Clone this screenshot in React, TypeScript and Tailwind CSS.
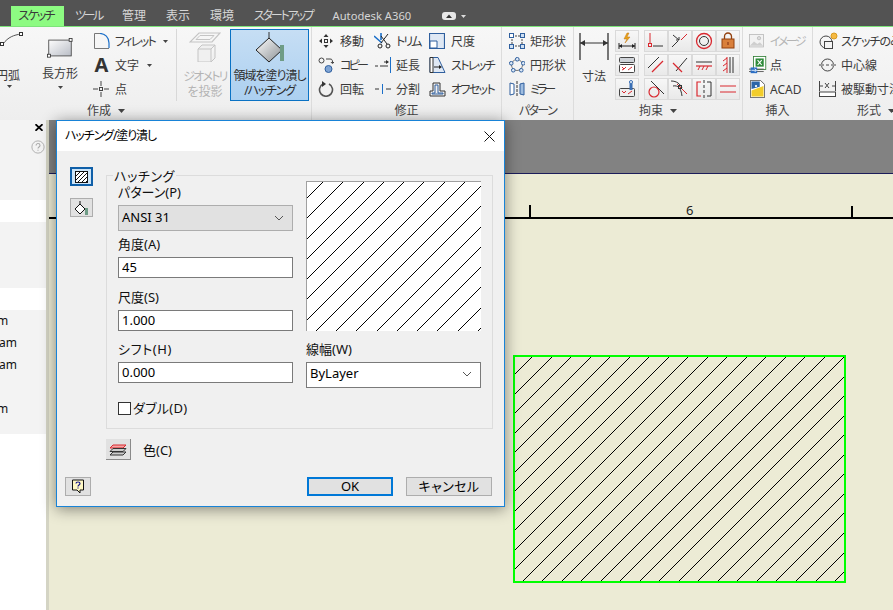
import React from "react";

const cn = (...a: (string | false | undefined)[]) => a.filter(Boolean).join(" ");

const I = ({ w = 16, h = 16, vw, vh, children, className }: { w?: number; h?: number; vw?: number; vh?: number; children: React.ReactNode; className?: string }) => (
  <svg width={w} height={h} viewBox={`0 0 ${vw ?? w} ${vh ?? h}`} fill="none" className={cn("block shrink-0", className)}>
    {children}
  </svg>
);

const Caret = ({ className }: { className?: string }) => (
  <svg width="7" height="4" viewBox="0 0 7 4" className={cn("block shrink-0", className)}>
    <path d="M0 0h7L3.5 4z" fill="#444" />
  </svg>
);

const SmallCaret = ({ className }: { className?: string }) => (
  <svg width="5" height="3" viewBox="0 0 5 3" className={cn("block shrink-0", className)}>
    <path d="M0 0h5L2.5 3z" fill="#444" />
  </svg>
);

const Chevron = () => (
  <svg width="10" height="6" viewBox="0 0 10 6" fill="none" className="block shrink-0">
    <path d="M1 1l4 4 4-4" stroke="#555" />
  </svg>
);

const B = "#2f5f9e";
const R = "#d9282f";
const K = "#333";

function Row({ icon, label, caret, disabled, gap = "gap-[6px]", track = "" }: { icon: React.ReactNode; label: string; caret?: boolean; disabled?: boolean; gap?: string; track?: string }) {
  return (
    <div className={cn("flex h-[24px] items-center whitespace-nowrap", gap, disabled ? "text-[#b4b4b4]" : "text-[#3a3a3a]")}>
      {icon}
      <span className={cn("pt-px", track)}>{label}</span>
      {caret && <SmallCaret className="ml-[3px]" />}
    </div>
  );
}

function Group({ w, title, arrow, titleClass, children }: { w: string; title: string; arrow?: boolean; titleClass?: string; children: React.ReactNode }) {
  return (
    <section className={cn("flex shrink-0 flex-col border-r border-[#dcdcdc]", w)}>
      <div className="flex h-[74px] pt-[2px]">{children}</div>
      <div className={cn("flex h-[19px] items-center gap-[7px] pt-px text-[#444]", titleClass ?? "justify-center")}>
        <span className={title === "パターン" ? "tracking-[-1.6px]" : ""}>{title}</span>
        {arrow && <Caret />}
      </div>
    </section>
  );
}

const MiniBtn = ({ children }: { children: React.ReactNode }) => (
  <div className="flex h-[22px] w-[24px] items-center justify-center border border-[#dadada] bg-gradient-to-b from-[#f7f7f7] to-[#e9e9e9]">{children}</div>
);

/* ---------- ribbon icons ---------- */
const ArcIcon = () => (
  <I w={24} h={22}>
    <path d="M3 12C8 5 14 3 21 2" stroke="#555" />
    <rect x="0.5" y="10.5" width="3" height="3" fill="#fff" stroke="#333" />
    <rect x="19.5" y="0.5" width="3" height="3" fill="#fff" stroke="#333" />
  </I>
);
const RectIcon = () => (
  <svg width="30" height="20" viewBox="0 0 32 24" className="block">
    <defs>
      <linearGradient id="rg" x1="0" y1="0" x2="1" y2="1">
        <stop offset="0" stopColor="#fdfdfd" />
        <stop offset="1" stopColor="#b9bdc6" />
      </linearGradient>
    </defs>
    <rect x="2.5" y="2.5" width="27" height="19" fill="url(#rg)" stroke="#444" />
    <rect x="1" y="19.5" width="3.5" height="3.5" fill="#fff" stroke="#333" />
    <rect x="27" y="0.5" width="3.5" height="3.5" fill="#fff" stroke="#333" />
  </svg>
);
const FilletIcon = () => (
  <I w={17} h={16}>
    <path d="M1.5 15.5V.5H7" stroke="#777" />
    <path d="M1.5 15.5H16" stroke="#777" />
    <path d="M7 .5C12 .5 16 4.5 16 10v5" stroke="#1b6fc9" strokeWidth="1.2" />
  </I>
);
const PointIcon = () => (
  <I w={16} h={16}>
    <path d="M8 0v5M8 11v5M0 8h5M11 8h5" stroke="#444" />
    <rect x="6.5" y="6.5" width="3" height="3" stroke="#444" />
  </I>
);
const GeomIcon = () => (
  <svg width="32" height="30" viewBox="0 0 32 30" fill="none" className="block">
    <path d="M10 1h21l-8 9H1z" stroke="#c4c4c4" strokeWidth="1.2" />
    <path d="M11 3.5h14l-4 4H7z" stroke="#c4c4c4" />
    <path d="M9 17h13v13H9zM9 17l4-4h13l-4 4M26 13v13l-4 4" fill="#f0f0f0" stroke="#c4c4c4" />
  </svg>
);
const FillIcon = () => (
  <svg width="30" height="32" viewBox="0 0 30 32" fill="none" className="block">
    <defs>
      <linearGradient id="dg" x1="0" y1="0" x2="1" y2="1">
        <stop offset="0" stopColor="#fff" />
        <stop offset="1" stopColor="#8a8f93" />
      </linearGradient>
    </defs>
    <path d="M14 1v12" stroke="#333" />
    <path d="M14 7L27 19 14 31 1 19z" fill="url(#dg)" stroke="#222" />
    <rect x="25" y="14" width="4" height="16" fill="#6f9c86" />
  </svg>
);
const MoveIcon = () => (
  <I>
    <path d="M8 1l2.5 3h-5zM8 15l2.5-3h-5zM1 8l3-2.5v5zM15 8l-3-2.5v5z" fill="#333" />
    <rect x="6.5" y="6.5" width="3" height="3" stroke="#333" />
  </I>
);
const CopyIcon = () => (
  <I>
    <circle cx="3.5" cy="3.5" r="2.5" stroke="#444" />
    <circle cx="10.5" cy="12" r="3.5" fill="#7fa4d4" stroke={B} />
    <path d="M8 2h4c2 0 2.5 1 2.5 3" stroke="#444" />
    <path d="M12.5 5h4l-2 2z" fill="#444" />
  </I>
);
const RotateIcon = () => (
  <I>
    <path d="M5 3A6.5 6.5 0 1 0 11 3" stroke="#555" strokeWidth="1.6" />
    <path d="M4 0v6l4-3z" fill="#333" />
  </I>
);
const TrimIcon = () => (
  <I w={18} h={16}>
    <path d="M0 3l8 7M7 0v7" stroke="#1b6fc9" strokeWidth="1.6" />
    <path d="M14 1L7 10M7 3l6 8" stroke="#222" />
    <circle cx="6" cy="13" r="2" stroke="#222" />
    <circle cx="14" cy="13" r="2" stroke="#222" />
  </I>
);
const ExtendIcon = () => (
  <I w={18} h={16}>
    <path d="M16.5 0v16" stroke="#1b6fc9" />
    <path d="M1 9h3M6 9h3M10 5h4" stroke="#333" />
    <path d="M12 3l3 2-3 2z" fill="#333" />
    <path d="M9 9h5" stroke="#333" />
  </I>
);
const SplitIcon = () => (
  <I w={18} h={16}>
    <path d="M1 8h4M12 8h5" stroke="#333" />
    <path d="M8.500 3v10" stroke="#1b6fc9" />
  </I>
);
const ScaleIcon = () => (
  <I>
    <path d="M.5.5h15v15H.5z" fill="#dfe8f4" stroke={B} strokeWidth="1.2" />
    <path d="M1 8h7v7H1z" fill="#fff" stroke={B} />
  </I>
);
const StretchIcon = () => (
  <I w={17} h={16}>
    <path d="M1 .5h8l7 15H1z" fill="#dfe8f4" stroke={B} />
    <path d="M1 .5h3v15H1z" fill="#fff" stroke="#333" />
    <path d="M5 10h6" stroke="#222" />
    <path d="M10 8l3 2-3 2z" fill="#222" />
  </I>
);
const OffsetIcon = () => (
  <I w={17} h={16}>
    <path d="M1 15V10h3V2h7v8h5v5z" stroke="#333" />
    <path d="M3 13v-1h3V4h3v8h5v1z" stroke={B} />
  </I>
);
const RectPatIcon = () => (
  <I>
    <path d="M3 3h10M3 3v10M3 13h10M13 3v10" stroke="#444" strokeDasharray="2 1" />
    {[[0, 0], [11, 0], [0, 11], [11, 11]].map(([x, y], i) => (
      <rect key={i} x={x + 0.5} y={y + 0.5} width="4" height="4" fill={i === 0 ? "#fff" : "#cfe0f3"} stroke={B} />
    ))}
  </I>
);
const CircPatIcon = () => (
  <I>
    <circle cx="8" cy="8" r="5.500" stroke="#777" />
    {[[6, 0], [0, 4], [12, 4], [2, 11], [10, 11]].map(([x, y], i) => (
      <rect key={i} x={x + 0.5} y={y + 0.5} width="3.500" height="3.500" rx="1.500" fill="#dbe8f6" stroke={B} />
    ))}
  </I>
);
const MirrorIcon = () => (
  <I>
    <path d="M1 2l4 1v10l-4 1z" fill="#fff" stroke={B} />
    <path d="M15 2l-4 1v10l4 1z" fill="#9fbde0" stroke={B} />
    <path d="M8 0v16" stroke="#333" strokeDasharray="3 1" />
  </I>
);
const DimIcon = () => (
  <I w={30} h={28}>
    <path d="M1 0v27M29 0v27" stroke="#333" strokeWidth="1.3" />
    <path d="M1 10h28" stroke="#333" />
    <path d="M1 10l5-3v6zM29 10l-5-3v6z" fill="#333" />
  </I>
);
const Box = ({ children }: { children: React.ReactNode }) => <I w={18} h={18}>{children}</I>;
const SmallAuto = () => (
  <Box>
    <path d="M9 1L6 7h3l-2 4 5-6H9l2-4z" fill="#e8a317" stroke="#c0761a" strokeWidth=".5" />
    <path d="M1 14h16M1 11v6M17 11v6" stroke="#222" />
    <path d="M1 14l3-2v4zM17 14l-3-2v4z" fill="#222" />
  </Box>
);
const SmallForm = () => (
  <Box>
    <rect x="1.500" y="1.500" width="15" height="5" rx="1" fill="#cfd3d8" stroke="#444" />
    <rect x="1.500" y="8.500" width="15" height="8" rx="1" fill="#fff" stroke="#444" />
    <path d="M4 11l2 2 2-2M4 14l2-1M10 14l4-3" stroke={R} />
  </Box>
);
const SmallFormLink = () => (
  <Box>
    <rect x="1.500" y="8.500" width="15" height="8" rx="1" fill="#eee" stroke="#444" />
    <path d="M4 11l2 2 2-2M10 14l4-3" stroke={R} />
    <path d="M13 1v9" stroke="#3a6fb5" strokeWidth="3" />
    <circle cx="13" cy="2" r="1.500" fill="#fff" stroke="#3a6fb5" />
  </Box>
);
const cons: React.ReactNode[] = [
  <><path d="M3 1v10" stroke={R} /><rect x="1.500" y="11.500" width="3" height="3" stroke={R} /><path d="M6 14h10" stroke={K} /></>,
  <><path d="M10 8L16 2" stroke={R} /><path d="M1 15l6-6" stroke={K} /><path d="M2 3l6 5M5 8h3V5" stroke={K} /></>,
  <><circle cx="9" cy="9" r="7.500" stroke={R} strokeWidth="1.300" /><circle cx="9" cy="9" r="4.500" stroke={K} /></>,
  <><rect x="3" y="7" width="12" height="9" fill="#d9803c" stroke="#92400e" /><path d="M5.500 7V4.500a3.500 3.500 0 0 1 7 0V7" stroke="#92400e" strokeWidth="1.300" /><path d="M9 10v3" stroke="#7c2d12" /></>,
  <><path d="M1 12L12 1" stroke={K} /><path d="M5 16L16 5" stroke={R} strokeWidth="1.200" /></>,
  <><path d="M5 15L16 2" stroke={K} /><path d="M2 7l9 9" stroke={R} strokeWidth="1.200" /></>,
  <><path d="M1 6h16" stroke={K} /><path d="M1 10h16" stroke={R} strokeWidth="1.200" /><path d="M3 14l2-4M7 14l2-4M11 14l2-4" stroke={R} /></>,
  <><path d="M11 1v16M14 1v16" stroke={K} /><path d="M8 1v16" stroke={R} /><path d="M4 5l4-3M4 10l4-3M4 15l4-3" stroke={R} /></>,
  <><circle cx="7" cy="12" r="5" stroke={R} strokeWidth="1.200" /><path d="M4 1l13 13" stroke={K} /></>,
  <><path d="M0 1c6 0 9 3 11 7M2 6c5-1 8 2 9 10" stroke={K} /><path d="M6 4l10 10" stroke={R} /><rect x="7.500" y="5.500" width="3" height="3" stroke={K} /></>,
  <><path d="M9 0v18" stroke={K} strokeDasharray="3 2" /><path d="M6 2H2v14h4" stroke={R} strokeWidth="1.200" /><path d="M12 2h4v14h-4" stroke={K} /></>,
  <><path d="M1 6h16M1 12h16" stroke={R} strokeWidth="1.200" /></>,
];
const ImageIcon = () => (
  <I w={15} h={15} vw={18} vh={18}>
    <rect x=".5" y=".5" width="17" height="15" fill="#f2f2f2" stroke="#bbb" />
    <path d="M1 14l5-5 4 3 3-2 4 4z" fill="#cfcfcf" />
    <circle cx="12" cy="5" r="2" fill="#ddd" stroke="#bbb" />
  </I>
);
const ExcelIcon = () => (
  <I w={18} h={18} vw={22} vh={22}>
    <rect x="5.500" y=".5" width="15" height="16" fill="#fff" stroke="#2e7d32" />
    <rect x="8" y="3" width="10" height="10" fill="#2e8b3a" />
    <path d="M10.500 5l5 6M15.500 5l-5 6" stroke="#fff" strokeWidth="1.300" />
    <path d="M0 16h18M0 19h18" stroke="#444" />
    <path d="M2 14h8v7H2z" fill="#2c6fc4" />
    <path d="M3 17.500h6M7 15.500l2 2-2 2" stroke="#fff" />
  </I>
);
const AcadIcon = () => (
  <I w={15} h={18} vw={20} vh={24} className="ml-px">
    <path d="M.5.5H14L19.500 6v17.500H.5z" fill="#fff" stroke="#333" />
    <path d="M2 2h11v7l-11 3z" fill="#2c65a8" />
    <path d="M2 14l16-6v14H2z" fill="#f2cd2b" />
    <circle cx="8" cy="8" r="1.500" fill="#fff" />
  </I>
);
const SketchOnlyIcon = () => (
  <I w={19} h={18}>
    <circle cx="7" cy="10" r="6" stroke="#444" />
    <rect x="5.500" y="9.500" width="8" height="7" fill="#f5f5f5" stroke="#444" />
    <circle cx="15" cy="4" r="3" fill="#f5b942" stroke="#d99a1c" />
  </I>
);
const CenterIcon = () => (
  <I w={17} h={16}>
    <circle cx="8.500" cy="8" r="6" stroke="#444" />
    <path d="M2 8h13" stroke="#f5f5f5" strokeWidth="2" />
    <path d="M0 8h5M7 8h3M12 8h5" stroke="#444" />
  </I>
);
const DrivenIcon = () => (
  <I w={17} h={16}>
    <path d="M.5 0v10M16.500 0v10M0 5h4M13 5h4" stroke="#444" />
    <path d="M6 2l4 5M10 2L6 7" stroke="#444" />
    <rect x=".5" y="11" width="16" height="4.500" fill="#fff" stroke="#444" />
  </I>
);

/* ---------- hatching ---------- */
function Hatch({ w, h, c0, step, n }: { w: number; h: number; c0: number; step: number; n: number }) {
  return (
    <svg width={w} height={h} viewBox={`0 0 ${w} ${h}`} className="block" shapeRendering="crispEdges">
      {Array.from({ length: n }, (_, i) => {
        const c = Math.round(c0 + step * i);
        return <line key={i} x1={c + 1} y1={-1} x2={c - h - 1} y2={h + 1} stroke="#000" strokeWidth="1" />;
      })}
    </svg>
  );
}

/* ---------- dialog parts ---------- */
const Label = ({ children, className }: { children: React.ReactNode; className?: string }) => (
  <div className={cn("h-[16px] text-[13px] leading-[16px] text-[#111]", className)}>{children}</div>
);
const Field = ({ value, className }: { value: string; className?: string }) => (
  <input readOnly value={value} className={cn("block h-[21px] w-[175px] border border-[#7a7a7a] bg-white pb-[2px] pl-[3px] pr-[3px] text-[13px] text-black outline-none", className)} />
);

function HatchDialog() {
  return (
    <div className="absolute left-[56px] top-[120px] flex h-[387px] w-[449px] flex-col border border-[#1883d7] bg-[#f0f0f0] shadow-[0_2px_14px_rgba(0,0,0,0.45)]">
      <header className="flex h-[30px] shrink-0 items-center justify-between bg-white pl-[8px] pr-[8px] text-[12px] text-black">
        <span className="tracking-[-1.1px]">ハッチング/塗り潰し</span>
        <svg width="11" height="11" viewBox="0 0 11 11" fill="none" className="mr-[1px] block">
          <path d="M.5.5l10 10M10.500.5l-10 10" stroke="#111" />
        </svg>
      </header>

      <div className="flex flex-1 flex-col">
        <div className="flex pt-[24px]">
          <div className="flex w-[49px] shrink-0 flex-col gap-[12px] pl-[13px]">
            <button className="-mt-[8px] flex h-[19px] w-[23px] items-center justify-center border-2 border-[#0f5fa8] bg-[#cce4f7]">
              <svg width="13" height="12" viewBox="0 0 13 12" fill="none" className="block">
                <rect x=".5" y=".5" width="12" height="11" fill="#fff" stroke="#111" />
                <path d="M0 6l6-6M0 10L10 0M2 12L13 1M6 12l7-7M10 12l3-3" stroke="#111" />
              </svg>
            </button>
            <button className="flex h-[19px] w-[23px] items-center justify-center border border-[#adadad] bg-[#e1e1e1]">
              <svg width="15" height="14" viewBox="0 0 15 14" fill="none" className="block">
                <path d="M6 0v4" stroke="#111" />
                <path d="M6 3l5 5-5 5-5-5z" fill="#fff" stroke="#111" />
                <rect x="11" y="7" width="3" height="7" fill="#6f9c86" />
              </svg>
            </button>
          </div>

          <div className="relative h-[254px] w-[387px] border border-[#dcdcdc]">
            <div className="absolute -top-[8px] left-[6px] bg-[#f0f0f0] px-[1px] text-[13px] leading-[16px] tracking-[0.6px] text-[#111]">ハッチング</div>
            <div className="flex gap-[13px] pl-[11px]">
              <div className="w-[175px]">
                <Label className="mt-[8px]">パターン(P)</Label>
                <div className="mt-[5px] flex h-[26px] items-center justify-between border border-[#adadad] bg-[#e1e1e1] pl-[3px] pr-[8px] text-[13px] text-black">
                  <span>ANSI 31</span>
                  <Chevron />
                </div>
                <Label className="mt-[5px]">角度(A)</Label>
                <Field value="45" className="mt-[5px]" />
                <Label className="mt-[11px]">尺度(S)</Label>
                <Field value="1.000" className="mt-[5px]" />
                <Label className="mt-[10px] tracking-[0.6px]">シフト(H)</Label>
                <Field value="0.000" className="mt-[5px]" />
                <div className="mt-[18px] flex items-center gap-[2px]">
                  <span className="block h-[13px] w-[13px] border border-[#333] bg-white" />
                  <span className="h-[14px] text-[13px] leading-[14px] tracking-[0.3px] text-[#111]">ダブル(D)</span>
                </div>
              </div>
              <div className="w-[175px]">
                <div className="mt-[5px] h-[150px] w-[175px] overflow-hidden border-l border-t border-[#a0a0a0] bg-white">
                  <Hatch w={174} h={149} c0={16} step={20.25} n={17} />
                </div>
                <Label className="mt-[10px]">線幅(W)</Label>
                <div className="mt-[5px] flex h-[26px] items-center justify-between border border-[#7a7a7a] bg-white pb-[2px] pl-[3px] pr-[8px] text-[13px] text-black">
                  <span>ByLayer</span>
                  <Chevron />
                </div>
              </div>
            </div>
          </div>
        </div>

        <div className="mt-[10px] flex items-center pl-[49px]">
          <button className="flex h-[21px] w-[25px] items-center justify-center border-b border-r border-[#8a8a8a] border-l-[#f5f5f5] border-t-[#f5f5f5] bg-[#e1e1e1]">
            <svg width="18" height="14" viewBox="0 0 18 14" fill="none" className="block">
              <path d="M4 3h13l-3 3H1z" fill="#f3a6a6" stroke={R} />
              <path d="M4 6.500h13l-3 3H1z" fill="#ccc" stroke="#333" />
              <path d="M4 10h13l-3 3H1z" fill="#ccc" stroke="#333" />
            </svg>
          </button>
          <span className="ml-[12px] pt-[2px] text-[13px] text-[#111]">色(C)</span>
        </div>

        <div className="mt-[16px] flex items-center pl-[8px]">
          <button className="flex h-[19px] w-[26px] items-center justify-center border border-[#adadad] bg-[#e1e1e1]">
            <svg width="14" height="15" viewBox="0 0 14 15" className="block" fill="none">
              <path d="M1.500 1h11v10H9v3l-3-3H1.500z" fill="#fff8c4" stroke="#111" />
              <path d="M5 4.500C5 2.500 9 2.500 9 4.500c0 1.500-2 1.500-2 3M7 8.500v1" stroke="#12128a" strokeWidth="1.200" />
            </svg>
          </button>
          <button className="ml-[216px] h-[19px] w-[86px] border-2 border-[#0078d7] bg-[#e1e1e1] text-[13px] leading-[15px] text-black">OK</button>
          <button className="ml-[13px] h-[19px] w-[86px] border border-[#adadad] bg-[#e1e1e1] text-[13px] leading-[17px] tracking-[0.4px] text-black">キャンセル</button>
        </div>
      </div>
    </div>
  );
}

export default function App() {
  return (
    <div className="relative flex h-[610px] w-[893px] flex-col overflow-hidden bg-white text-[12px] [font-family:'Noto_Sans','Noto_Sans_CJK_JP',sans-serif] [font-feature-settings:'palt']">
      {/* tab strip */}
      <nav className="flex h-[26px] shrink-0 items-end bg-[#535353] pl-[11px] text-[#d6d6d6]">
        <div className="flex h-[20px] w-[53px] items-center justify-center bg-[#8dfb82] pr-[3px] tracking-[-1.8px] text-[#3a3a3a]">スケッチ</div>
        <div className="flex h-[20px] items-center">
          <span className="ml-[11px] tracking-[-2.4px]">ツール</span>
          <span className="ml-[20px]">管理</span>
          <span className="ml-[20px]">表示</span>
          <span className="ml-[20px]">環境</span>
          <span className="ml-[20px] tracking-[-2.2px]">スタートアップ</span>
          <span className="ml-[20px] text-[11.2px]">Autodesk A360</span>
          <span className="ml-[31px] block h-[8px] w-[14px] rounded-[3px] bg-[#e6e6e6]">
            <svg width="14" height="8" viewBox="0 0 14 8" className="block"><path d="M4 6l3-3.500L10 6z" fill="#333" /></svg>
          </span>
          <svg width="5" height="3" viewBox="0 0 5 3" className="ml-[5px] block"><path d="M0 0h5L2.500 3z" fill="#ddd" /></svg>
        </div>
      </nav>

      {/* ribbon */}
      <div className="flex h-[94px] shrink-0 overflow-hidden border-t border-[#7de47a] bg-gradient-to-b from-[#f7f7f7] to-[#eeeeee]">
        <Group w="w-[312px]" title="作成" arrow titleClass="justify-start pl-[87px]">
          <div className="flex w-[24px] shrink-0 flex-col overflow-hidden">
            <div className="mt-[3px] h-[22px] w-[24px]"><ArcIcon /></div>
            <div className="mt-[13px] flex w-[20px] justify-end overflow-hidden whitespace-nowrap text-[#3a3a3a]"><span className="shrink-0">円弧</span></div>
            <SmallCaret className="ml-[7px]" />
          </div>
          <div className="ml-[17px] flex w-[38px] shrink-0 flex-col items-center">
            <div className="mt-[9px]"><RectIcon /></div>
            <span className="mt-[7px] whitespace-nowrap text-[#3a3a3a]">長方形</span>
            <SmallCaret className="mt-[3px]" />
          </div>
          <div className="ml-[14px] flex w-[76px] shrink-0 flex-col">
            <Row icon={<FilletIcon />} label="フィレット" caret gap="gap-[5px]" track="tracking-[-1.6px]" />
            <Row icon={<span className="w-[17px] text-center text-[20px] font-bold leading-none text-[#333]">A</span>} label="文字" caret gap="gap-[5px]" />
            <Row icon={<PointIcon />} label="点" />
          </div>
          <div className="ml-[7px] h-[72px] w-px shrink-0 bg-[#d8d8d8]" />
          <div className="ml-[7px] flex w-[42px] shrink-0 flex-col items-center text-center text-[#b4b4b4]">
            <div className="mt-[3px]"><GeomIcon /></div>
            <span className="mt-[7px] whitespace-nowrap leading-[15px]"><span className="tracking-[-1.8px]">ジオメトリ</span><br />を投影</span>
          </div>
          <div className="ml-[4px] flex h-[72px] w-[79px] shrink-0 flex-col items-center border border-[#0a72c4] bg-gradient-to-b from-[#c6def4] to-[#acd0f0] text-center text-[#2e2e2e]">
            <div className="mt-[1px]"><FillIcon /></div>
            <span className="mt-[5px] whitespace-nowrap leading-[15px]"><span className="tracking-[-1px]">領域を塗り潰し</span><br /><span className="tracking-[-1.2px]">/ハッチング</span></span>
          </div>
        </Group>

        <Group w="w-[190px]" title="修正">
          <div className="ml-[6px] flex w-[56px] flex-col"><Row icon={<MoveIcon />} label="移動" /><Row icon={<CopyIcon />} label="コピー" track="tracking-[-2.8px]" /><Row icon={<RotateIcon />} label="回転" /></div>
          <div className="flex w-[55px] flex-col"><Row icon={<TrimIcon />} label="トリム" gap="gap-[4px]" track="tracking-[-2px]" /><Row icon={<ExtendIcon />} label="延長" gap="gap-[4px]" /><Row icon={<SplitIcon />} label="分割" gap="gap-[4px]" /></div>
          <div className="flex flex-col"><Row icon={<ScaleIcon />} label="尺度" /><Row icon={<StretchIcon />} label="ストレッチ" gap="gap-[5px]" track="tracking-[-1.6px]" /><Row icon={<OffsetIcon />} label="オフセット" gap="gap-[5px]" track="tracking-[-1.6px]" /></div>
        </Group>

        <Group w="w-[72px]" title="パターン">
          <div className="ml-[7px] flex flex-col"><Row icon={<RectPatIcon />} label="矩形状" gap="gap-[5px]" /><Row icon={<CircPatIcon />} label="円形状" gap="gap-[5px]" /><Row icon={<MirrorIcon />} label="ミラー" gap="gap-[5px]" track="tracking-[-3px]" /></div>
        </Group>

        <Group w="w-[169px]" title="拘束" arrow>
          <div className="ml-[4px] flex w-[32px] flex-col items-center">
            <div className="mt-[4px]"><DimIcon /></div>
            <span className="mt-[7px] whitespace-nowrap text-[#3a3a3a]">寸法</span>
          </div>
          <div className="ml-[5px] flex flex-col gap-[2px] pt-px">
            <MiniBtn><SmallAuto /></MiniBtn>
            <MiniBtn><SmallForm /></MiniBtn>
            <MiniBtn><SmallFormLink /></MiniBtn>
          </div>
          <div className="ml-[5px] grid h-max grid-cols-4 gap-y-[2px] pt-px">
            {cons.map((c, i) => <MiniBtn key={i}><Box>{c}</Box></MiniBtn>)}
          </div>
        </Group>

        <Group w="w-[70px]" title="挿入">
          <div className="ml-[6px] flex flex-col"><Row icon={<ImageIcon />} label="イメージ" disabled gap="gap-[6px]" track="tracking-[-2.6px]" /><Row icon={<ExcelIcon />} label="点" gap="gap-[3px]" /><Row icon={<AcadIcon />} label="ACAD" gap="gap-[5px]" /></div>
        </Group>

        <section className="flex w-[100px] shrink-0 flex-col">
          <div className="flex h-[74px] flex-col pl-[6px] pt-[2px]"><Row icon={<SketchOnlyIcon />} label="スケッチのみ" gap="gap-[3px]" track="tracking-[-1px]" /><Row icon={<CenterIcon />} label="中心線" gap="gap-[5px]" /><Row icon={<DrivenIcon />} label="被駆動寸法" gap="gap-[5px]" /></div>
          <div className="flex h-[19px] items-center gap-[7px] pl-[44px] pt-px text-[#444]"><span>形式</span><Caret /></div>
        </section>
      </div>

      {/* below the ribbon */}
      <main className="flex min-h-0 flex-1">
        <aside className="flex w-[46px] shrink-0 flex-col bg-[#f3f3f3] text-[12px] text-[#111]">
          <div className="flex h-[36px] flex-col items-end pr-[1px] pt-[4px]">
            <svg width="8" height="7" viewBox="0 0 8 7" fill="none" className="mr-[2px] block"><path d="M.5.2l7 6.600M7.500.2l-7 6.600" stroke="#000" strokeWidth="1.700" /></svg>
            <svg width="14" height="14" viewBox="0 0 16 16" fill="none" className="mt-[9px] block"><circle cx="8" cy="8" r="7" stroke="#a8a8a8" /><path d="M5.800 6.200c0-2.800 4.500-2.800 4.500 0 0 1.800-2.300 1.800-2.300 3.500M8 11v1.300" stroke="#a8a8a8" strokeWidth="1.200" /></svg>
          </div>
          <div className="mt-[44px] h-[22px] bg-white" />
          <div className="mt-[66px] h-[22px] bg-white" />
          <div className="flex h-[22px] items-center overflow-hidden"><span className="-ml-[3px]">m</span></div>
          <div className="flex h-[22px] items-center overflow-hidden"><span className="-ml-[1px]">am</span></div>
          <div className="flex h-[22px] items-center overflow-hidden"><span className="-ml-[1px]">am</span></div>
          <div className="h-[22px]" />
          <div className="flex h-[22px] items-center overflow-hidden"><span className="-ml-[3px]">m</span></div>
          <div className="h-[14px]" />
          <div className="min-h-0 flex-1 bg-white" />
        </aside>

        <div className="relative flex min-w-0 flex-1 flex-col border-l-[3px] border-l-[#d4d4c4]">
          <div className="h-[54px] shrink-0 border-b border-[#1c1c5a] bg-[#828282]" />
          <div className="flex-1 bg-[#ecebd5]" />
          {/* drawing on the sketch canvas */}
          <div className="absolute left-0 right-0 top-[97px] h-[2px] bg-black" />
          <div className="absolute left-[480px] top-[85px] h-[12px] w-[2px] bg-black" />
          <div className="absolute left-[802px] top-[86px] h-[11px] w-[2px] bg-black" />
          <span className="absolute left-[637px] top-[82px] text-[13px] leading-[16px] text-[#222]">6</span>
          <div className="absolute left-[464px] top-[235px] h-[228px] w-[333px] border-2 border-[#00ff00]">
            <Hatch w={329} h={224} c0={17} step={19.52} n={29} />
          </div>
        </div>
      </main>

      <HatchDialog />
    </div>
  );
}
